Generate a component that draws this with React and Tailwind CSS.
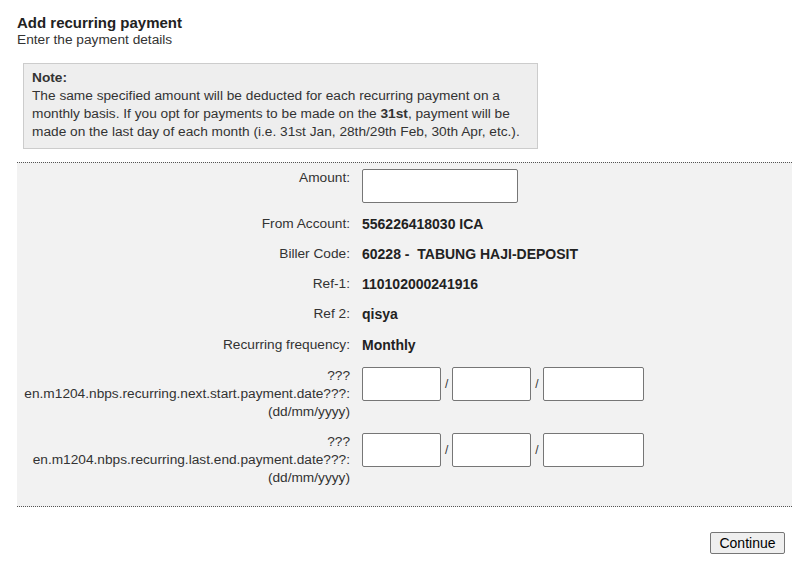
import React from "react";

const font = { fontFamily: '"Liberation Sans", Arial, sans-serif' };

function Row({ label, children, className = "" }) {
  return (
    <div className={`flex py-[6px] ${className}`}>
      <div className="w-[333px] shrink-0 text-right leading-[18px] text-[13.7px] text-[#333]">{label}</div>
      <div className="pl-[12px] leading-[18px] text-[14px] font-bold text-[#222]">{children}</div>
    </div>
  );
}

function DateInputs() {
  return (
    <div className="flex items-center font-normal">
      <input className="w-[79px] h-[34px] bg-white border border-[#767676] rounded-[2px]" />
      <span className="mx-[4px] text-[12px] text-[#333]">/</span>
      <input className="w-[79px] h-[34px] bg-white border border-[#767676] rounded-[2px]" />
      <span className="mx-[4px] text-[12px] text-[#333]">/</span>
      <input className="w-[101px] h-[34px] bg-white border border-[#767676] rounded-[2px]" />
    </div>
  );
}

export default function App() {
  return (
    <div className="w-[793px] h-[587px] bg-white text-[#333]" style={font}>
      <div className="pl-[17px] pt-[14px]">
        <div className="text-[15px] font-bold leading-[17px] text-[#222]">Add recurring payment</div>
        <div className="text-[13.7px] leading-[18px] text-[#333]">Enter the payment details</div>
        <div className="ml-[6px] mt-[14px] w-[515px] h-[86px] bg-[#eeeeee] border border-[#cccccc] px-[8px] pt-[5px] text-[13.7px] leading-[18px] text-[#333]">
          <div className="font-bold">Note:</div>
          <div className="whitespace-nowrap">The same specified amount will be deducted for each recurring payment on a</div>
          <div className="whitespace-nowrap">
            monthly basis. If you opt for payments to be made on the <b>31st</b>, payment will be
          </div>
          <div className="whitespace-nowrap">made on the last day of each month (i.e. 31st Jan, 28th/29th Feb, 30th Apr, etc.).</div>
        </div>
        <div className="mt-[13px] w-[775px] bg-[#f2f2f2] border-t border-b border-dotted border-[#555] pb-[13px]">
          <Row label="Amount:">
            <input className="w-[156px] h-[34px] bg-white border border-[#767676] rounded-[2px]" />
          </Row>
          <Row label="From Account:">556226418030 ICA</Row>
          <Row label="Biller Code:">
            <span className="whitespace-pre">60228 -  TABUNG HAJI-DEPOSIT</span>
          </Row>
          <Row label="Ref-1:">110102000241916</Row>
          <Row label="Ref 2:">qisya</Row>
          <Row label="Recurring frequency:" className="mt-[1px]">Monthly</Row>
          <Row
            className="mt-[1px]"
            label={
              <>
                ???
                <br />
                en.m1204.nbps.recurring.next.start.payment.date???:
                <br />
                (dd/mm/yyyy)
              </>
            }
          >
            <DateInputs />
          </Row>
          <Row
            label={
              <>
                ???
                <br />
                en.m1204.nbps.recurring.last.end.payment.date???:
                <br />
                (dd/mm/yyyy)
              </>
            }
          >
            <DateInputs />
          </Row>
        </div>
        <div className="flex justify-end pr-[8px] mt-[25px]">
          <button className="w-[75px] h-[22px] bg-[#efefef] border border-[#767676] rounded-[2px] text-[14px] leading-[18px] text-black">
            Continue
          </button>
        </div>
      </div>
    </div>
  );
}
